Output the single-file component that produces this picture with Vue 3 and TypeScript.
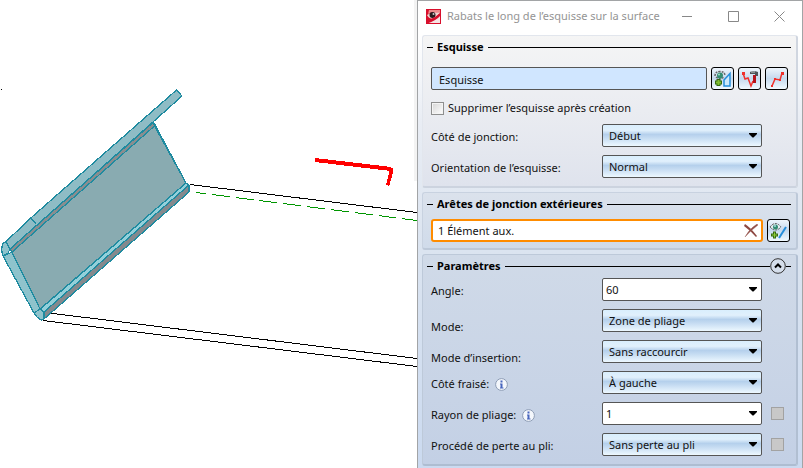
<script setup lang="ts">
import { ref } from 'vue'

interface Param {
  id: string
  label: string
  value: string
  editable?: boolean
  low?: boolean
  info?: boolean
  toggle?: boolean
}

const sketch = ref('Esquisse')
const edges = ref('1 Élément aux.')
const removeSketch = ref(false)
const expanded = ref(true)

const sketchOptions = ref<Param[]>([
  { id: 'side', label: 'Côté de jonction:', value: 'Début' },
  { id: 'orientation', label: 'Orientation de l’esquisse:', value: 'Normal' },
])

const params = ref<Param[]>([
  { id: 'angle', label: 'Angle:', value: '60', editable: true },
  { id: 'mode', label: 'Mode:', value: 'Zone de pliage', low: true },
  { id: 'insertion', label: 'Mode d’insertion:', value: 'Sans raccourcir', low: true },
  { id: 'milled', label: 'Côté fraisé:', value: 'À gauche', info: true },
  { id: 'radius', label: 'Rayon de pliage:', value: '1', editable: true, info: true, toggle: true },
  { id: 'loss', label: 'Procédé de perte au pli:', value: 'Sans perte au pli', toggle: true },
])
</script>

<template>
  <main class="workspace">
    <section class="viewport">
      <svg class="model" viewBox="0 0 417 468" preserveAspectRatio="xMinYMin meet" shape-rendering="crispEdges">
        <rect x="414" y="0" width="3" height="181" fill="#f3f3f3" />
        <rect x="1" y="89" width="1" height="1" fill="#000" />
        <g fill="none" stroke="#000" stroke-width="1">
          <path d="M190 184.500L417 212.500" />
          <path d="M45 312.500L417 358.500" />
          <path d="M43 320.500L417 366.500" />
        </g>
        <path d="M196 192.500L417 220.500" fill="none" stroke="#009600" stroke-dasharray="18 6" stroke-dashoffset="8" />
        <g stroke="#1f8ba0" stroke-width="1.300" stroke-linejoin="round">
          <path d="M176.500 90L182 96L153 122L10 249L6 241.500L33 216Z" fill="#8ebcc5" />
          <path d="M153.500 122L154.500 126L12 252L10 249Z" fill="#898d8f" />
          <path d="M154.500 126L186 183L40 309L12 252Z" fill="#89abb1" />
          <path d="M186 183L189 185L43 313L38 311Z" fill="#93d0da" />
          <path d="M189 185L189 192L45 318L44 312Z" fill="#85898d" />
          <path d="M8 254L12 252L40 309L34 313L3 256Z" fill="#8ec3cc" />
          <path d="M6 241.500L2.500 244L1.500 250L3 256L8 253L10 249Z" fill="#8ec3cc" />
          <path d="M34 313L40 309L44 312L44 319L41 320L37 317Z" fill="#8ec3cc" />
          <path d="M31 218L36 224M153.500 122L186 183" fill="none" />
        </g>
        <path d="M315 160L391 169" fill="none" stroke="#f00" stroke-width="4" />
        <path d="M391.500 168L391 173L387.500 185.500" fill="none" stroke="#f00" stroke-width="3.500" />
      </svg>
    </section>

    <section class="dialog" aria-labelledby="dialog-title">
      <header class="titlebar">
        <svg class="logo" viewBox="0 0 15 15">
          <rect width="15" height="15" fill="#d80f2c" />
          <path d="M3 1H14V5Q8 1 2 5Z" fill="#ee8b8c" />
          <path d="M1 6Q6 2 14 4L7 10Q3 10 1 6Z" fill="#f3d4d0" />
          <circle cx="6.500" cy="6" r="3" fill="#2c1b1e" />
          <circle cx="7.500" cy="5" r="1" fill="#c9c9c9" />
          <path d="M1 13Q9 12 14 6V14H1Z" fill="#f6e4e4" />
          <path d="M0 10Q8 11 15 3V6Q10 12 0 15Z" fill="#d80f2c" />
        </svg>
        <h1 id="dialog-title">Rabats le long de l’esquisse sur la surface</h1>
        <div class="window-buttons">
          <button type="button" aria-label="Réduire">
            <svg viewBox="0 0 11 11"><path d="M0 5.500H10" /></svg>
          </button>
          <button type="button" aria-label="Agrandir">
            <svg viewBox="0 0 11 11"><path d="M.5 .5H10.500V10.500H.5Z" /></svg>
          </button>
          <button type="button" aria-label="Fermer">
            <svg viewBox="0 0 11 11"><path d="M.5 .5L10.500 10.500M10.500 .5L.5 10.500" /></svg>
          </button>
        </div>
      </header>

      <div class="groups">
        <section class="group group-sketch">
          <h2>Esquisse</h2>
          <div class="field-row">
            <input v-model="sketch" class="box sketch-field" type="text" readonly aria-label="Esquisse" />
            <button type="button" class="tool" aria-label="Afficher et ajouter une esquisse">
              <svg viewBox="0 0 19 19">
                <path d="M2 7Q2 2.500 7 2.500T12 7M3 8Q7 11 11 8" fill="none" stroke="#666" stroke-width="1.500" stroke-dasharray="2 1" />
                <circle cx="7" cy="6.500" r="3" fill="#338c72" /><circle cx="6" cy="5.500" r="1" fill="#a8e0c6" />
                <path d="M5.500 10V17M2 13.500H9" stroke="#356b12" stroke-width="4" />
                <path d="M5.500 11V16M3 13.500H8" stroke="#80bd32" stroke-width="2" />
                <path d="M11 17V11L17 4.500V17Z" fill="#cce9fb" stroke="#258edb" stroke-width="1.500" />
              </svg>
            </button>
            <button type="button" class="tool" aria-label="Réparer l’esquisse">
              <svg viewBox="0 0 19 19">
                <path d="M3 4L5 10L8 9L11 17L13 12" fill="none" stroke="#f0302b" stroke-width="1.500" />
                <path d="M2 3h3v3H2Z" fill="#f0302b" />
                <path d="M10 3Q13 1 18 3V7H15V5H10Z" fill="#4c5359" />
                <path d="M13 6H16V14H13Z" fill="#b5121b" />
                <path d="M11 3H15" stroke="#c5cdd2" />
              </svg>
            </button>
            <button type="button" class="tool" aria-label="Dessiner une esquisse">
              <svg viewBox="0 0 19 19">
                <path d="M5 17L8 10L13 11L15 4" fill="none" stroke="#f0302b" stroke-width="1.500" />
                <path d="M4 16h2v2H4ZM7 9h2v2H7ZM12 10h2v2H12ZM14 3h3v3H14Z" fill="#f0302b" />
              </svg>
            </button>
          </div>
          <label class="check">
            <input v-model="removeSketch" type="checkbox" />
            <span>Supprimer l’esquisse après création</span>
          </label>
          <div class="rows">
            <div v-for="p in sketchOptions" :key="p.id" class="row">
              <label :for="p.id">{{ p.label }}</label>
              <div class="combo">
                <select :id="p.id" v-model="p.value" class="box">
                  <option>{{ p.value }}</option>
                </select>
                <svg class="arrow" viewBox="0 0 8 5"><path d="M0 0H8V1L4.500 4.500H3.500L0 1Z" /></svg>
              </div>
            </div>
          </div>
        </section>

        <section class="group group-edges">
          <h2>Arêtes de jonction extérieures</h2>
          <div class="field-row">
            <div class="edge-field">
              <input v-model="edges" type="text" aria-label="Arêtes de jonction extérieures" />
              <button type="button" aria-label="Effacer" @click="edges = ''">
                <svg viewBox="0 0 14 13">
                  <path d="M1 0Q6 3 13 12L12 13Q7 7 0 2Z" fill="#8e4943" />
                  <path d="M13 0Q5 5 1 13Q6 7 14 1Z" fill="#8e4943" stroke="#a8706a" stroke-width=".5" />
                </svg>
              </button>
            </div>
            <button type="button" class="tool" aria-label="Afficher et ajouter une arête">
              <svg viewBox="0 0 19 19">
                <path d="M1 6Q6.500 -1 12 6Q6.500 12 1 6Z" fill="#e5eef1" stroke="#555" stroke-dasharray="2 1" />
                <circle cx="6.500" cy="6" r="2.500" fill="#338c72" /><circle cx="6" cy="5" r="1" fill="#a8d8e0" />
                <path d="M5.500 10.500V17.500M2 14H9" stroke="#356b12" stroke-width="3" />
                <path d="M5.500 11.500V16.500M3 14H8" stroke="#8fce38" />
                <path d="M10 17L17 6" stroke="#258edb" stroke-width="2" />
              </svg>
            </button>
          </div>
        </section>

        <section class="group group-params">
          <h2>
            Paramètres
            <button type="button" class="collapse" :aria-expanded="expanded" aria-label="Replier" @click="expanded = !expanded">
              <svg viewBox="0 0 16 16">
                <circle cx="8" cy="8" r="7.300" fill="#d5deeb" stroke="#333" />
                <path d="M5 9.500L8 6.500L11 9.500" fill="none" stroke="#000" stroke-width="2" />
              </svg>
            </button>
          </h2>
          <div v-if="expanded" class="rows">
            <div v-for="p in params" :key="p.id" class="row" :class="{ low: p.low }">
              <div class="caption">
                <label :for="p.id">{{ p.label }}</label>
                <svg v-if="p.info" class="info" viewBox="0 0 13 13">
                  <circle cx="6.500" cy="6.500" r="5.900" fill="#f4f7fc" stroke="#8d9cb5" />
                  <path d="M5.500 2.500h2v2h-2ZM5 5.500H7.500V9.500H8.500V10.500H5V9.500H5.500V6.500H5Z" fill="#4866bd" />
                </svg>
              </div>
              <div v-if="p.editable" class="combo editable box">
                <input :id="p.id" v-model="p.value" type="text" />
                <button type="button" :aria-label="'Valeurs : ' + p.label">
                  <svg class="arrow" viewBox="0 0 8 5"><path d="M0 0H8V1L4.500 4.500H3.500L0 1Z" /></svg>
                </button>
              </div>
              <div v-else class="combo">
                <select :id="p.id" v-model="p.value" class="box">
                  <option>{{ p.value }}</option>
                </select>
                <svg class="arrow" viewBox="0 0 8 5"><path d="M0 0H8V1L4.500 4.500H3.500L0 1Z" /></svg>
              </div>
              <input v-if="p.toggle" class="toggle" type="checkbox" disabled :aria-label="p.label" />
            </div>
          </div>
        </section>
      </div>
    </section>
  </main>
</template>

<style>
body {
  background: #fff;
}
</style>

<style scoped>
* {
  box-sizing: border-box;
}

.workspace {
  display: grid;
  grid-template-columns: minmax(0, 417fr) minmax(0, 386fr);
  min-height: 100vh;
  overflow: hidden;
  font: 11px/16px "Noto Sans", "Open Sans", sans-serif;
  color: #111;
}

button,
input,
select {
  margin: 0;
  padding: 0;
  border: 0;
  font: inherit;
  color: inherit;
  background: none;
  appearance: none;
  outline: 0;
}

svg {
  display: block;
}

.model {
  width: 100%;
}

.dialog {
  display: flex;
  flex-direction: column;
  border: 1px solid #a2a4a6;
  border-bottom: 0;
  background: linear-gradient(#fff 34px, #e9edf4 120px, #dbe4f0 250px, #cbdaf0);
}

.titlebar {
  display: flex;
  align-items: center;
  height: 30px;
  padding-left: 8px;
  background: #fff;
}

.logo {
  width: 15px;
  height: 15px;
  flex: none;
}

h1 {
  flex: 1;
  margin: 0 0 0 6px;
  font-size: 11px;
  font-weight: 400;
  color: #949494;
  white-space: nowrap;
}

.window-buttons {
  display: flex;
}

.window-buttons button {
  display: grid;
  place-items: center;
  width: 46px;
  height: 30px;
}

.window-buttons svg {
  width: 11px;
  height: 11px;
  fill: none;
  stroke: #888;
}

.groups {
  display: flex;
  flex-direction: column;
  gap: 4px;
  padding: 4px 4px 2px;
}

.group {
  padding: 3px 5px 8px 4px;
  border: 1px solid #c3cddb;
  border-width: 1px 2px 2px 1px;
  border-radius: 3px;
}

.group-sketch {
  border-color: #e2e6ed #d0d6e0 #ccd3df #e2e6ed;
  background: linear-gradient(#f5f5f5, #dfe3ed);
}

.group-edges {
  padding-bottom: 6px;
  border-color: #c8d2e0 #bdc9d9 #bdc9d9 #c8d2e0;
  background: linear-gradient(#dbe2ec, #d0dbea);
}

.group-params {
  border-color: #bdc9d9 #b1bfd2 #aebdd1 #bdc9d9;
  background: linear-gradient(#d0dae8, #c3d0e5);
}

h2 {
  display: flex;
  align-items: center;
  gap: 4px;
  margin: 0;
  font-size: 11px;
  line-height: 16px;
  font-weight: 700;
  color: #000;
  white-space: nowrap;
}

h2::before,
h2::after {
  content: "";
  width: 6px;
  height: 1px;
  background: #000;
}

h2::after {
  flex: 1;
}

.group-params h2::after {
  order: 1;
}

.collapse {
  order: 2;
  display: flex;
  align-items: center;
  height: 16px;
  margin-left: -4px;
}

.collapse::after {
  content: "";
  width: 5px;
  height: 1px;
  background: #000;
}

.collapse svg {
  width: 16px;
  height: 16px;
}

.field-row {
  display: flex;
  gap: 4px;
  padding-left: 4px;
}

.group-sketch .field-row {
  margin-top: 12px;
  padding-right: 3px;
}

.group-edges .field-row {
  margin-top: 7px;
  padding-right: 1px;
}

.box {
  height: 23px;
  border: 1px solid #555;
  border-radius: 2px;
}

.sketch-field {
  flex: 1;
  min-width: 0;
  padding: 2px 7px 0;
  background: #d0e6ff;
}

.tool {
  display: grid;
  place-items: center;
  flex: none;
  width: 23px;
  height: 23px;
  border: 1px solid #000;
  border-radius: 3px;
  background: linear-gradient(#eef5fc, #c5d9ee 50%, #f0f9ff);
}

.tool svg {
  width: 19px;
  height: 19px;
  fill: none;
}

.check {
  display: flex;
  align-items: center;
  gap: 4px;
  width: fit-content;
  margin: 10px 0 8px;
  padding-left: 4px;
  white-space: nowrap;
}

.check input {
  width: 13px;
  height: 13px;
  border: 1px solid #8e8f8f;
  background: linear-gradient(135deg, #d5d5d5, #fff);
  box-shadow: inset 0 0 0 1px #f4f4f4;
}

.check input:checked {
  background: #4a5668;
}

.rows {
  display: grid;
  gap: 8px;
}

.group-params .rows {
  margin-top: 4px;
}

.row {
  display: grid;
  grid-template-columns: minmax(0, 171fr) minmax(0, 160fr) 29px;
  align-items: center;
  padding-left: 4px;
}

.row > label,
.caption {
  margin-top: 3px;
  white-space: nowrap;
}

.caption {
  display: flex;
  align-items: center;
  gap: 6px;
}

.low .caption {
  margin-top: 10px;
  margin-bottom: -3px;
}

.info {
  width: 13px;
  height: 13px;
}

.combo {
  display: grid;
  align-items: center;
}

.combo > * {
  grid-area: 1 / 1;
}

select.box {
  width: 100%;
  padding: 1px 6px 0;
  background: linear-gradient(#d9eefd 0, #e1f0fc 25%, #b5d0ec 45%, #c3daf1 60%, #edf8ff);
}

.arrow {
  justify-self: end;
  width: 8px;
  height: 5px;
  margin-right: 5px;
  pointer-events: none;
}

.editable {
  background: #fff;
}

.editable input {
  width: 100%;
  padding-left: 3px;
}

.editable button {
  justify-self: end;
}

.editable .arrow {
  margin-right: 4px;
}

.toggle {
  justify-self: end;
  width: 13px;
  height: 13px;
  margin-right: 7px;
  border: 1px solid #a2a2a2;
  background: #c8c8c8;
}

.edge-field {
  display: flex;
  align-items: center;
  flex: 1;
  min-width: 0;
  height: 23px;
  padding: 0 3px 0 5px;
  border: 2px solid #ff8c00;
  border-radius: 3px;
  background: #fff;
}

.edge-field input {
  flex: 1;
  min-width: 0;
}

.edge-field svg {
  width: 14px;
  height: 13px;
}
</style>
